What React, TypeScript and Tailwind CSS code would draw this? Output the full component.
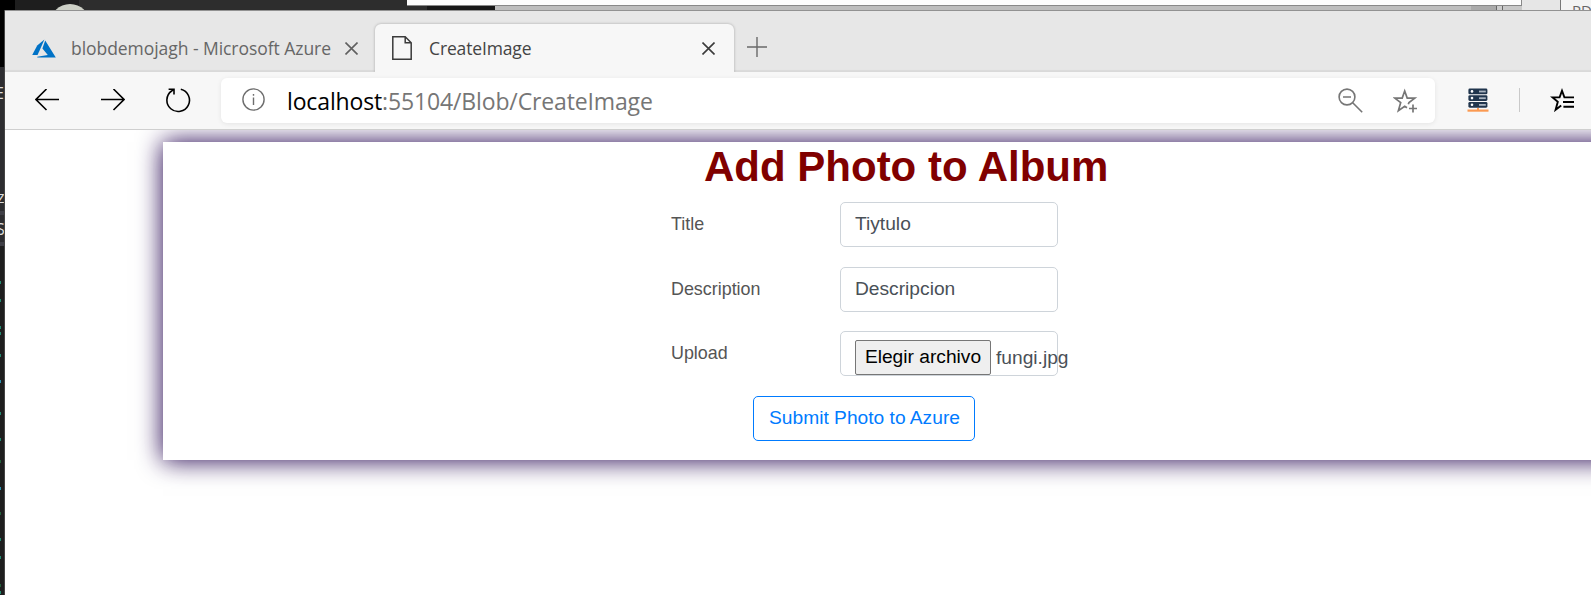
import type { ReactNode } from 'react';

function AzureLogo() {
  return (
    <svg width="24" height="19" viewBox="0 0 24 19" className="shrink-0">
      <path d="M12.4 0.6 L5.2 6.6 L0.2 16 H5.6 Z" fill="#0072c6" />
      <path d="M13.2 1.4 L10.4 9.5 L15.8 16 L5.3 17.8 V18.4 H23.8 Z" fill="#0072c6" />
    </svg>
  );
}

function CloseIcon({ color }: { color: string }) {
  return (
    <svg width="13" height="13" viewBox="0 0 13 13" className="shrink-0" fill="none" stroke={color} strokeWidth="1.6">
      <path d="M0.5 0.5 L12.5 12.5 M12.5 0.5 L0.5 12.5" />
    </svg>
  );
}

function PageIcon() {
  return (
    <svg width="20" height="24" viewBox="0 0 20 24" className="shrink-0" fill="none" stroke="#3b3b3b" strokeWidth="1.5">
      <path d="M0.8 0.8 H13.2 L19.2 6.8 V23.2 H0.8 Z M13.2 0.8 V6.8 H19.2" />
    </svg>
  );
}

function Tab({ active, children }: { active?: boolean; children: ReactNode }) {
  return (
    <div
      className={
        active
          ? 'relative z-10 flex h-[48px] w-[359px] shrink-0 items-center rounded-t-[6px] bg-[#f7f7f7] pl-[17px] shadow-[0_0_3px_rgba(0,0,0,0.28)]'
          : 'flex h-[48px] w-[370px] shrink-0 items-center pl-[27px]'
      }
    >
      {children}
    </div>
  );
}

function TabStrip() {
  return (
    <div className="flex h-[61px] items-end overflow-hidden bg-[#e7e7e7] text-[17.5px] shadow-[inset_0_-2px_1px_rgba(0,0,0,0.06)] [font-family:'Open_Sans',sans-serif]">
      <Tab>
        <AzureLogo />
        <span className="ml-[15px] w-[260px] whitespace-nowrap tracking-[-0.05px] text-[#666]">
          blobdemojagh - Microsoft Azure
        </span>
        <span className="ml-[14px]">
          <CloseIcon color="#606060" />
        </span>
      </Tab>
      <Tab active>
        <PageIcon />
        <span className="ml-[17px] w-[273px] whitespace-nowrap tracking-[-0.14px] text-[#444]">
          CreateImage
        </span>
        <CloseIcon color="#3b3b3b" />
      </Tab>
      <div className="flex h-[48px] items-center pb-[2px] pl-[13px]">
        <svg width="20" height="20" viewBox="0 0 20 20" stroke="#6a6a6a" strokeWidth="1.4">
          <path d="M10 0 V20 M0 10 H20" />
        </svg>
      </div>
    </div>
  );
}

function Toolbar() {
  return (
    <div className="relative z-20 flex h-[58px] items-center border-b border-[#cfcfcf] bg-[#f7f7f7] pl-[30px]">
      <svg width="24" height="22" viewBox="0 0 24 22" fill="none" stroke="#000" strokeWidth="1.6" className="mb-[2px] shrink-0">
        <path d="M24 10.5 H1 M11.5 0 L1 10.5 L11.5 21" />
      </svg>
      <svg width="24" height="22" viewBox="0 0 24 22" fill="none" stroke="#000" strokeWidth="1.6" className="mb-[2px] ml-[42px] shrink-0">
        <path d="M0 10.5 H23 M12.5 0 L23 10.5 L12.5 21" />
      </svg>
      <svg width="26" height="25" viewBox="0 0 26 25" fill="none" stroke="#000" strokeWidth="1.6" className="mb-px ml-[40px] shrink-0">
        <path d="M15.8 1.2 A11.3 11.3 0 1 1 6.6 3 L8.8 1.2 M3.6 1.2 H9 V6.6" />
      </svg>
      <div className="ml-[30px] flex h-[45px] w-[1214px] shrink-0 items-center rounded-[6px] bg-white pl-[21px] shadow-[0_1px_5px_rgba(0,0,0,0.08)]">
        <svg width="23" height="23" viewBox="0 0 23 23" fill="none" stroke="#6e6e6e" strokeWidth="1.4" className="mb-[2px] shrink-0">
          <circle cx="11.5" cy="11.5" r="10.6" />
          <path d="M11.5 9.6 V17 M11.5 6 V7.8" />
        </svg>
        <div className="ml-[22px] mt-px w-[1051px] whitespace-nowrap text-[23px] leading-[30px] tracking-[-0.14px] text-[#767676] [font-family:'Open_Sans',sans-serif]">
          <span className="text-black">localhost</span>:55104/Blob/CreateImage
        </div>
        <svg width="25" height="25" viewBox="0 0 25 25" fill="none" stroke="#767676" strokeWidth="1.6" className="mb-px shrink-0">
          <circle cx="9" cy="9" r="7.9" />
          <path d="M5 9 H13 M14.7 14.7 L24.2 24.2" />
        </svg>
        <svg width="25" height="25" viewBox="0 0 25 25" fill="none" stroke="#767676" strokeWidth="1.7" className="ml-[30px] shrink-0">
          <path d="M15.3 16.3 L16 14.6 L21.8 10.1 H14.2 L11.7 3 L9.2 10.1 H1.8 L7.7 14.6 L5.4 22.6 L11.7 18.2 L14 19.8 M20 16.5 V24.5 M16 20.5 H24" />
        </svg>
      </div>
      <svg width="22" height="24" viewBox="0 0 22 24" className="mb-px ml-[32px] shrink-0">
        {[0.5, 7.2, 13.9].map((y) => (
          <g key={y}>
            <rect x="1.4" y={y} width="19" height="5.8" rx="1.4" fill="#20354d" />
            <circle cx="5" cy={y + 2.9} r="1.3" fill="#fff" />
            <rect x="12" y={y + 2.1} width="6.8" height="1.8" fill="#a9b4c0" />
          </g>
        ))}
        <rect x="0.5" y="21.5" width="21" height="2.2" fill="#fb9a52" />
        <rect x="10" y="20" width="2" height="2" fill="#fb9a52" />
      </svg>
      <div className="mb-[2px] ml-[30px] h-[24px] w-px shrink-0 bg-[#c9c9c9]" />
      <svg width="25" height="24" viewBox="0 0 25 24" fill="none" stroke="#000" strokeWidth="1.9" className="mb-[2px] ml-[30px] shrink-0">
        <path d="M24 9.4 H14.4 L12 2.8 L9.6 9.4 H2.6 L7.8 13.8 L5.6 21.8 L11.2 17.6 M13 14 H24 M13.4 18.8 H24" />
      </svg>
    </div>
  );
}

function Row({ label, children }: { label: string; children: ReactNode }) {
  return (
    <div className="mb-[19.5px] flex h-[45px] items-start">
      <span className="w-[169px] shrink-0 pt-[8px] text-[17.9px] leading-[28px] text-[#555]">{label}</span>
      <div className="flex h-full w-[218px] items-center whitespace-nowrap rounded-[5px] border border-[#ced4da] bg-white pb-px pl-[14px] text-[19.2px] leading-[28px] text-[#495057]">
        {children}
      </div>
    </div>
  );
}

function PhotoForm() {
  return (
    <div className="-mr-[40px] ml-[158px] mt-[12px] h-[318px] bg-white pt-[4px] shadow-[0_0_24px_#270755,0_6px_24px_rgba(0,0,0,0.06)] [font-family:'Liberation_Sans',sans-serif]">
      <h1 className="ml-[541px] h-[56px] whitespace-nowrap text-[42px] font-bold leading-[41px] text-[#800000]">
        Add Photo to Album
      </h1>
      <div className="ml-[508px]">
        <Row label="Title">Tiytulo</Row>
        <Row label="Description">Descripcion</Row>
        <Row label="Upload">
          <span className="mt-[8px] flex h-[35px] w-[136px] shrink-0 items-center justify-center rounded-[2px] border border-[#767676] bg-[#efefef] pb-px text-black">
            Elegir archivo
          </span>
          <span className="mt-[9px] pl-[5px]">fungi.jpg</span>
        </Row>
        <button className="ml-[82px] h-[45px] w-[222px] rounded-[5px] border border-[#007bff] bg-white pl-px text-[19.2px] text-[#007bff]">
          Submit Photo to Azure
        </button>
      </div>
    </div>
  );
}

const specks = [
  'mt-[35px] bg-[#238a6e]', 'mt-[15px] bg-[#238a6e]', 'mt-[24px] bg-[#238a6e]',
  'mt-[3px] bg-[#238a6e]', 'mt-[19px] bg-[#238a6e]', 'mt-[23px] bg-[#2b91af]',
  'mt-[29px] bg-[#238a6e]', 'mt-[23px] bg-[#238a6e]', 'mt-[19px] bg-[#22623a]',
  'mt-[24px] bg-[#2b91af]', 'mt-[22px] bg-[#22623a]', 'mt-[23px] bg-[#238a6e]',
  'mt-[15px] bg-[#238a6e]', 'mt-[25px] bg-[#22623a]', 'mt-[4px] bg-[#238a6e]',
];

function EditorEdge() {
  return (
    <div className="flex w-[5px] shrink-0 flex-col overflow-hidden border-r border-[#444] bg-[#1e1e1e] text-[16px] leading-[20px] text-[#ddd] [font-family:'Open_Sans',sans-serif]">
      <div className="h-[57px] shrink-0 bg-black" />
      <div className="h-[118px] shrink-0 bg-[#2d2d30] pt-[16px]">
        <span className="-ml-[5px]">E</span>
      </div>
      <div className="h-[26px] shrink-0 bg-[#2d2d30] pt-[2px]">
        <span className="-ml-[3px]">z</span>
      </div>
      <div className="h-[35px] shrink-0 border-y-[4px] border-[#3f3f46] bg-[#2d2d30] pt-[4px]">
        <span className="-ml-[4px]">S</span>
      </div>
      {specks.map((c, i) => (
        <i key={i} className={`block h-[3px] w-px shrink-0 ${c}`} />
      ))}
    </div>
  );
}

function BackdropTop() {
  return (
    <div className="flex h-[10px] overflow-hidden bg-[#b9b9b9]">
      <div className="w-[15px] bg-black" />
      <div className="w-[64px] bg-[#1e1e1e]">
        <div className="relative ml-[35px] mt-[4px] h-[40px] w-[40px] rounded-full bg-[#cdd0c6]" />
      </div>
      <div className="w-[328px] bg-[#2d2d2d]" />
      <div className="w-[1115px] shrink-0">
        <div className="h-[5px] border-r border-[#888] bg-[#fdfdfd]" />
        <div className="flex h-[5px] border-t border-[#888]">
          <div className="w-[20px] bg-[#2d2d2d]" />
          <div className="w-[68px] bg-[#171717]" />
          <div className="w-[976px] bg-[#bdbdbd]" />
          <div className="w-[25px] bg-[#aaa]" />
          <div className="w-[7px] border-x border-[#666] bg-[#ccc]" />
          <div className="flex-1 bg-[#c8c8c8]" />
        </div>
      </div>
      <div className="w-[39px] border-r border-[#777] bg-[#e6e6e6]" />
      <div className="flex-1 overflow-hidden bg-[#f3f3f3] pl-[11px] pt-[2px] text-[15px] leading-[16px] text-[#666] [font-family:'Open_Sans',sans-serif]">
        PDF
      </div>
    </div>
  );
}

export default function App() {
  return (
    <div className="flex h-[595px] w-[1591px] flex-col overflow-hidden bg-white">
      <BackdropTop />
      <div className="flex min-h-0 flex-1">
        <EditorEdge />
        <main className="flex min-w-0 flex-1 flex-col overflow-hidden border-t border-[#929292] bg-white">
          <TabStrip />
          <Toolbar />
          <PhotoForm />
        </main>
      </div>
    </div>
  );
}
